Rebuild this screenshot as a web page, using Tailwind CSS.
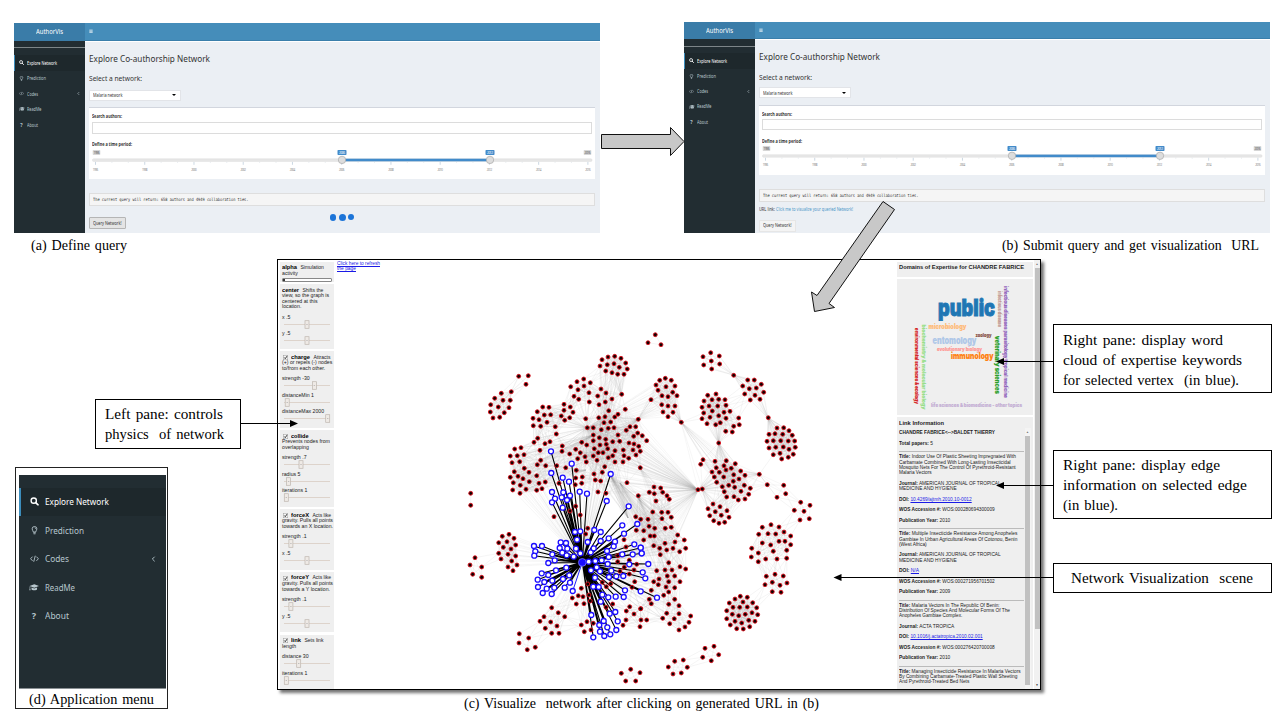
<!DOCTYPE html>
<html lang="en">
<head>
<meta charset="utf-8">
<title>AuthorVis workflow</title>
<script src="https://cdn.jsdelivr.net/npm/@tailwindcss/browser@4"></script>
</head>
<body class="bg-white">
<svg class="hidden" aria-hidden="true">
  <symbol id="i-search" viewBox="0 0 14 14"><circle cx="5.8" cy="5.8" r="4.2" fill="none" stroke="currentColor" stroke-width="2.2"/><path d="M9 9l3.6 3.6" stroke="currentColor" stroke-width="2.6" stroke-linecap="round"/></symbol>
  <symbol id="i-bulb" viewBox="0 0 14 14"><path d="M5.2 9.6C5.2 8 3.2 7 3.2 4.6a3.8 3.8 0 0 1 7.6 0C10.800 7 8.800 8 8.800 9.600z M7.200 2.700q1.600.100 1.700 1.600" fill="none" stroke="currentColor" stroke-width="1.400"/><path d="M5 10.900h4M5.500 12.600h3" stroke="currentColor" stroke-width="1.400"/></symbol>
  <symbol id="i-code" viewBox="0 0 14 14"><path d="M4 3.700L.900 7 4 10.300M10 3.700L13.100 7 10 10.300M8.200 2.300L5.800 11.700" fill="none" stroke="currentColor" stroke-width="1.400"/></symbol>
  <symbol id="i-cap" viewBox="0 0 18 14"><path d="M9.500 1.500l8.500 3-8.500 3-8.500-3z M4.500 7v3.400c0 2.400 10 2.400 10 0V7l-5 1.800z M1.200 5.200h1v4l.700 3H.500l.700-3z" fill="currentColor"/></symbol>
  <symbol id="i-left" viewBox="0 0 8 14"><path d="M6 3L2 7l4 4" fill="none" stroke="currentColor" stroke-width="1.600"/></symbol>
  <symbol id="i-bars" viewBox="0 0 12 12"><path d="M1 2.500h10M1 6h10M1 9.500h10" stroke="currentColor" stroke-width="2"/></symbol>
</svg>

<main class="relative w-[1280px] h-[720px] overflow-hidden bg-white text-black font-['Liberation_Serif',serif] text-[15.500px] [word-spacing:1.500px]">
  <section class="flex items-start pl-[14px] pt-[22px] gap-[84px] h-[259px]">
    <figure class="w-[586px]">
      <div id="shotA" class="mt-px flex flex-col h-[210px] font-['Noto_Sans',sans-serif] [word-spacing:0]"></div>
      <figcaption class="pl-[17px] h-[24px] leading-[24px]"><span data-w="96">(a) Define query</span></figcaption>
    </figure>
    <figure class="w-[586px]">
      <div id="shotB" class="flex flex-col h-[211px] font-['Noto_Sans',sans-serif] [word-spacing:0]"></div>
      <figcaption class="pl-[318px] h-[24px] leading-[24px]"><span data-w="257">(b) Submit query and get visualization&nbsp; URL</span></figcaption>
    </figure>
  </section>

  <section class="flex h-[461px]">
    <aside class="w-[277px] pt-[140px]">
      <div class="ml-[95px] w-[146px] h-[50px] border border-black bg-white pl-[9px] pt-[4px] leading-[20px]">
        <div><span data-w="118">Left pane: controls</span></div>
        <div><span data-w="119">physics&nbsp; of network</span></div>
      </div>
      <figure class="ml-[15px] mt-[18px] w-[153px] h-[242px] border border-[#222] pl-[3px] pt-[7px]">
        <ul id="menuD" class="w-[147px] h-[214px] bg-[#222d32] border-b border-[#8a9094] pt-[12.500px] text-[#b8c7ce] font-['Noto_Sans',sans-serif] [word-spacing:0] text-[9px]"></ul>
        <figcaption class="pl-[10px] leading-[20px]"><span data-w="125">(d) Application menu</span></figcaption>
      </figure>
    </aside>

    <figure class="w-[764px]">
      <div class="w-[764px] h-[431px] border border-black bg-white shadow-[3px_3px_3px_rgba(0,0,0,0.55)] flex overflow-hidden font-['Liberation_Sans',sans-serif] [word-spacing:0] text-[5.300px] leading-[5.500px] text-[#222]">
        <div id="controls" class="ml-[2px] mt-[1.500px] w-[54px] flex flex-col gap-[2.400px]"></div>
        <div class="w-[563px] relative">
          <svg id="net" class="block w-[563px] h-[429px]" viewBox="334 260 563 429"></svg>
          <a class="absolute left-[3px] top-[0.500px] text-[#1a1ae6]" href="#"><span class="underline" data-w="43">Click here to refresh</span><br><span class="underline" data-w="19">the page</span></a>
        </div>
        <div class="w-[136px] flex flex-col gap-[2.500px] pt-[1.500px]">
          <h2 class="h-[15.500px] bg-[#efefef] pl-[2px] pt-[2.500px] font-bold text-[6px] leading-[7px]"><span data-w="125">Domains of Expertise for CHANDRE FABRICE</span></h2>
          <svg class="block h-[135.500px] w-[136px] shrink-0 bg-[#efefef]" viewBox="897 279 136 135.500" font-family="Inter, sans-serif" font-weight="900" id="cloud"></svg>
          <div class="h-[272px] bg-[#efefef] flex">
            <div id="links" class="pl-[2px] pt-[2.500px] w-[127.500px]"></div>
            <div class="w-[6px] h-[261px] mt-[11px] bg-[#f4f4f4] flex flex-col items-center"><span class="text-[3px] leading-[8px] text-[#777]">▲</span><div class="w-[5px] h-[249px] bg-[#c1c1c1]"></div></div>
          </div>
        </div>
        <div class="ml-[1px] w-[6px] bg-[#f1f1f1] flex flex-col items-center"><span class="text-[3px] leading-[8px] text-[#777]">▲</span><div class="w-[5px] h-[361px] bg-[#c1c1c1]"></div><span class="mt-auto text-[3px] leading-[8px]">▼</span></div>
      </div>
      <figcaption class="pl-[187px] pt-[2px] leading-[22px]"><span data-w="355">(c) Visualize&nbsp; network after clicking on generated URL in (b)</span></figcaption>
    </figure>

    <aside class="pl-[12px] pt-[65px] leading-[20px]">
      <div class="w-[219px] h-[69px] border border-black bg-white pl-[9px] pt-[5px]">
        <div><span data-w="160">Right pane: display word</span></div>
        <div><span data-w="179">cloud of expertise keywords</span></div>
        <div><span data-w="176">for selected vertex&nbsp; (in blue).</span></div>
      </div>
      <div class="mt-[57px] w-[219px] h-[69px] border border-black bg-white pl-[9px] pt-[4px]">
        <div><span data-w="157">Right pane: display edge</span></div>
        <div><span data-w="184">information on selected edge</span></div>
        <div><span data-w="55">(in blue).</span></div>
      </div>
      <div class="mt-[44px] w-[219px] h-[30px] border border-black bg-white pl-[17px] pt-[4px]"><span data-w="182">Network Visualization&nbsp; scene</span></div>
    </aside>
  </section>

  <svg class="absolute left-0 top-0 w-[1280px] h-[720px] pointer-events-none" viewBox="0 0 1280 720">
    <g fill="#c8c8c8" stroke="#111" stroke-width="1">
      <path d="M601.500 134.500H670.500V127.500L684 141.500L670.500 155.500V148.500H601.500Z"/>
      <path d="M883 201.500L894.500 209.500L829 303.500L834.500 307.500L814.500 311.500L811.500 292L817 295.500Z"/>
    </g>
    <g stroke="#000" stroke-width="1">
      <path d="M241 423.500H291M1053 361.500H1003M1053 485.500H1003M1053 577.500H840"/>
      <path stroke="none" d="M298 423.500L290 420v7zM996 361.500l8-3.500v7zM996 485.500l8-3.500v7zM833.500 577.500l8-3.500v7z"/>
    </g>
  </svg>
</main>

<script>
const $ = id => document.getElementById(id);
const t = (s, w, cls = '') => `<span class="${cls}" data-w="${w}">${s}</span>`;
const icon = (n, w, h) => n === '?' ? '<b>?</b>' : `<svg style="width:${w}px;height:${h}px"><use href="#i-${n}"/></svg>`;
const items = [['search','Explore Network',30,64],['bulb','Prediction',19,39],['code','Codes',11,24],['cap','ReadMe',14.5,30],['?','About',11,24]];

/* Dashboard screenshots: each row is given as its height and its content */
function dashboard(o) {
  const row = (h, html = '', cls = '') => `<div class="flex items-center shrink-0 ${cls}" style="height:${h}px">${html}</div>`;
  const side = items.map((m, i) => row(o.item,
    `<span class="w-[6px] shrink-0 flex justify-center text-[5px]">${icon(m[0], m[0]==='cap'?6:5, m[0]==='cap'?5.5:5)}</span><span class="ml-[2px] flex">${t(m[1], m[2])}</span>${i===2?`<span class="ml-auto mr-[5px]">${icon('left',3,5)}</span>`:''}`,
    i === 0 ? 'bg-[#1e282c] text-white border-l border-[#3c8dbc] pl-[3.500px]' : 'pl-[4.500px]')).join('');
  const years = [1996,1998,2000,2002,2004,2006,2008,2010,2012,2014,2016];
  const px = y => 2.5 + (y - 1996) * 24.62;
  const ticks = years.map(y => `<path d="M${px(y)} 0v3" stroke="#a9bdd0" stroke-width=".6"/>` + (y < 2016 ? `<path d="M${px(y)+16.4} 0v1M${px(y)+32.8} 0v1" stroke="#ccd6df" stroke-width=".5"/>` : '') + `<text x="${px(y)}" y="${o.lab}" text-anchor="middle" font-size="3" fill="#888" textLength="5.500">${y}</text>`).join('');
  const flag = (x, y, b) => `<rect x="${x-(b?4.5:3.8)}" y="0" width="${b?9:7.6}" height="5" rx=".7" fill="${b?'#428bca':'#d6d6d6'}"/><text x="${x}" y="3.7" text-anchor="middle" font-size="3.2" fill="${b?'#fff':'#555'}" textLength="6">${y}</text>`;
  const ty = o.track;
  const slider = `<svg class="block w-[506px] overflow-visible" style="height:${o.slider}px">
    ${flag(7.5,1996)}${flag(498.5,2016)}${flag(253,2006,1)}${flag(401,2012,1)}
    <g transform="translate(4 ${ty+1.8})">${ticks}</g>
    <rect x="3.500" y="${ty-1.2}" width="499.500" height="2.600" rx="1" fill="#e7e7e7" stroke="#d9d9d9" stroke-width=".4"/>
    <rect x="253" y="${ty-1.3}" width="148" height="2.600" fill="#428bca"/>
    <g fill="#ddd" stroke="#aaa" stroke-width=".7"><circle cx="253" cy="${ty-.1}" r="3.700"/><circle cx="401" cy="${ty-.1}" r="3.700"/></g></svg>`;
  return `<div class="flex text-white" style="height:${o.head}px">
      <div class="w-[70.500px] bg-[#3a7ca8] flex items-center pl-[22px] text-[7.500px]">${t('AuthorVis', 27)}</div>
      <div class="grow bg-[#458dba] border-b border-[#3a7fab] flex items-center pl-[4.500px]">${icon('bars',4,4.5)}</div>
    </div>
    <div class="flex grow min-h-0">
      <div class="w-[70.500px] shrink-0 bg-[#222d32] text-[#b8c7ce] text-[4.900px] leading-[6px]">
        ${row(o.s0,'','border-b border-[#7d8588]')}${row(o.s1)}${side}
      </div>
      <div class="grow min-w-0 bg-[#ebeff4] border-t border-white pl-[4.400px] pr-[5px] text-[#333] overflow-hidden leading-none">
        ${row(o.a)}
        ${row(14, t('Explore Co-authorship Network', 121), 'text-[9.800px]')}
        ${row(o.b)}
        ${row(10, t('Select a network:', 53), 'text-[7.600px]')}
        ${row(o.c)}
        ${row(o.sel, t('Malaria network', 29.5) + '<span class="ml-auto border-x-[2px] border-x-transparent border-t-[2.500px] border-t-black"></span>', 'w-[92px] bg-white border border-[#e2e4e8] pl-[3px] pr-[4px] text-[4.600px]')}
        ${row(o.d)}
        <div class="bg-white border-t border-[#d2d6de] w-[506px]" style="height:${o.box}px">
          ${row(o.e, t('Search authors:', 30), 'pl-[3px] pt-[3px] text-[4.900px] font-bold')}
          ${row(o.inp, '', 'ml-[3px] w-[500px] border border-[#dcdcdc] bg-white')}
          ${row(o.f)}
          ${row(8, t('Define a time period:', 40), 'pl-[3px] text-[4.900px] font-bold')}
          ${row(o.g)}
          ${slider}
        </div>
        ${row(o.h)}
        ${row(13, t('The current query will return: 658 authors and 4949 collaboration ties.', 155.5), "w-[506px] bg-[#f5f5f5] border border-[#dedede] pl-[3px] text-[4.400px] font-['DejaVu_Sans_Mono',monospace]")}
        ${o.tail(row)}
      </div>
    </div>`;
}
$('shotA').innerHTML = dashboard({head:18, s0:6.5, s1:7.7, item:15.45, a:10, b:7.5, c:6, sel:11.5, d:6.3, box:71.5,
  e:13.9, inp:11.5, f:7.2, g:1, slider:20, track:10, lab:8.8, h:14.7,
  tail: row => `<div class="flex">${row(12, t('Query Network!', 28.5), 'mt-[10.500px] w-[37px] bg-[#e4e4e4] border border-[#b5b5b5] rounded-[1px] pl-[3px] text-[4.900px]')}
    <div class="ml-[204.500px] mt-[7.500px] flex items-center gap-[2.500px] h-[7px]"><i class="w-[6px] h-[6.500px] rounded-full bg-[#1c74d8]"></i><i class="w-[7px] h-[7px] rounded-full bg-[#1c74d8]"></i><i class="w-[6px] h-[6px] rounded-full bg-[#1c74d8]"></i></div></div>`});
$('shotB').innerHTML = dashboard({head:17, s0:7.5, s1:6.9, item:15.15, a:10, b:8.3, c:5, sel:11, d:7, box:69.5,
  e:13, inp:11, f:6.8, g:.5, slider:20, track:9.9, lab:8.5, h:14.7,
  tail: row => row(12.5, t('URL link:', 16) + '<span class="text-[#4a96c8] ml-px" data-w="77">Click me to visualize your queried Network!</span>', 'mt-[0.600px] text-[4.900px]')
    + `<div class="mt-[4.300px] flex items-center h-[12px] w-[37px] bg-[#f4f4f4] border border-[#e6e6e6] pl-[3px] text-[4.900px]">${t('Query Network!', 28.5)}</div>`});

$('menuD').innerHTML = items.map((m, i) => `<li class="flex items-center h-[28.500px] ${i===0?'bg-[#1e282c] text-white border-l-2 border-[#3c8dbc] pl-[8px]':'pl-[10px]'}"><span class="w-[10px] flex justify-center">${icon(m[0], m[0]==='cap'?11:9, m[0]==='code'?9.5:8.8)}</span><span class="ml-[6.200px] flex">${t(m[1], m[3])}</span>${i===2?`<span class="ml-auto mr-[10px]">${icon('left',5,8)}</span>`:''}</li>`).join('');

/* Physics control cards: height, checkbox, name, description lines, sliders */
const cards = [
  [20.6, 0, 'alpha', ['Simulation','activity'], [], 15],
  [64.6, 0, 'center', ['Shifts the','view, so the graph is','centered at this','location.'], [['x .5',.5],['y .5',.5]], 17],
  [76.6, 1, 'charge', ['Attracts','(+) or repels (-) nodes','to/from each other.'], [['strength -30',.66],['distanceMin 1',.07],['distanceMax 2000',.95]], 19],
  [76.6, 1, 'collide', ['','Prevents nodes from','overlapping'], [['strength .7',.37],['radius 5',.1],['iterations 1',.05]], 17.5],
  [60.3, 1, 'forceX', ['Acts like','gravity. Pulls all points','towards an X location.'], [['strength .1',.15],['x .5',.5]], 18],
  [60, 1, 'forceY', ['Acts like','gravity. Pulls all points','towards a Y location.'], [['strength .1',.15],['y .5',.5]], 18],
  [55, 1, 'link', ['Sets link','length'], [['distance 30',.32],['iterations 1',.05]], 10],
];
$('controls').innerHTML = cards.map(([h, chk, n, d, s, w]) => `<div class="bg-[#efefef] pl-[2px] pt-[3px] shrink-0 overflow-hidden" style="height:${h}px">
  <div class="flex items-center h-[6px] whitespace-nowrap">${chk?'<svg class="w-[5px] h-[5px] mr-[3px] ml-px shrink-0" viewBox="0 0 10 10"><rect x=".5" y=".5" width="9" height="9" fill="#f8f8f8" stroke="#999"/><path d="M2.500 5l2 2.300L8 2.300" fill="none" stroke="#111" stroke-width="1.700"/></svg>':''}<b class="flex text-[6px] text-black">${t(n, w)}</b><span class="ml-[3.500px] text-[5px]">${d[0]}</span></div>
  ${d.slice(1).map(x => `<div class="whitespace-nowrap text-[5.200px]">${x}</div>`).join('')}
  ${n==='alpha'?'<div class="mt-[1.500px] w-[50px] h-[4px] rounded-[1px] border border-[#888] bg-white"><div class="w-[2px] h-[2px] bg-[#333]"></div></div>':''}
  <div class="h-[5px]"></div>
  ${s.map(([l, v]) => `<div class="h-[16.500px] whitespace-nowrap text-[5.200px]"><div class="h-[5px]">${l}</div><svg class="block w-[50px] h-[9px]" viewBox="0 0 50 9"><path d="M2 4.500h46" stroke="#ddd3cb" stroke-width="1"/><rect x="${(2+46*v-2).toFixed(1)}" y=".7" width="4" height="7.600" fill="#efeae6" stroke="#bdb6ae" stroke-width=".7"/><path d="M${2+46*v-.7} 4.500h1.400" stroke="#aaa" stroke-width=".7"/></svg></div>`).join('')}
</div>`).join('');

/* Publications of the selected link */
const P = (...l) => `<p class="mb-[5.050px]">${l.map(([s, w]) => `<span class="block h-[5.420px] leading-[5.400px]">${t(s, w)}</span>`).join('')}</p>`;
const B = s => `<b>${s}</b> `;
const A = s => `<a class="text-[#1a1ae6] underline">${s}</a>`;
const hr = '<hr class="w-[125px] border-t-[1px] border-[#bbb] mb-[2px]">';
$('links').innerHTML = `<h3 class="font-bold text-[6px] leading-[6px] mb-[4.800px]">${t('Link Information', 45)}</h3>` +
  P([B('CHANDRE FABRICE&lt;--&gt;BALDET THIERRY'),96]) + P([B('Total papers:')+'5',34]) + hr +
  P([B('Title:')+'Indoor Use Of Plastic Sheeting Impregnated With',117],['Carbamate Combined With Long-Lasting Insecticidal',111.7],['Mosquito Nets For The Control Of Pyrethroid-Resistant',116.7],['Malaria Vectors',32.7]) +
  P([B('Journal:')+'AMERICAN JOURNAL OF TROPICAL',101.7],['MEDICINE AND HYGIENE',57.7]) + P([B('DOI:')+A('10.4269/ajtmh.2010.10-0012'),72.7]) + P([B('WOS Accession #:')+'WOS:000280694300009',95.7]) + P([B('Publication Year:')+'2010',51.3]) + hr +
  P([B('Title:')+'Multiple Insecticide Resistance Among Anopheles',118.3],['Gambiae In Urban Agricultural Areas Of Cotonou, Benin',118.3],['(West Africa)',27.7]) +
  P([B('Journal:')+'AMERICAN JOURNAL OF TROPICAL',101.7],['MEDICINE AND HYGIENE',57.7]) + P([B('DOI:')+A('N/A'),20]) + P([B('WOS Accession #:')+'WOS:000271956701502',95.7]) + P([B('Publication Year:')+'2009',51.3]) + hr +
  P([B('Title:')+'Malaria Vectors In The Republic Of Benin:',100.7],['Distribution Of Species And Molecular Forms Of The',111],['Anopheles Gambiae Complex.',63.3]) +
  P([B('Journal:')+'ACTA TROPICA',55.3]) + P([B('DOI:')+A('10.1016/j.actatropica.2010.02.001'),83.7]) + P([B('WOS Accession #:')+'WOS:000276420700008',95.7]) + P([B('Publication Year:')+'2010',51.3]) + hr +
  P([B('Title:')+'Managing Insecticide Resistance In Malaria Vectors',121.7],['By Combining Carbamate-Treated Plastic Wall Sheeting',118.3],['And Pyrethroid-Treated Bed Nets',70.3]);

/* Word cloud: text, x, baseline y, font size, length, colour, rotation */
$('cloud').innerHTML = [
  ['public',938,315.5,23,57,'#1f77b4',0],['microbiology',928.5,328.5,7.2,38,'#ffbb78',0],['zoology',975.5,336.5,4.5,16,'#8c564b',0],
  ['entomology',932.5,344,9.3,44,'#aec7e8',0],['evolutionary biology',937,351,5,45,'#ff9896',0],['immunology',951,359,8.8,42.5,'#ff7f0e',0],
  ['life sciences & biomedicine - other topics',931,407,5,91,'#c5b0d5',0],
  ['environmental sciences & ecology',914.8,328,5,76,'#d62728',90],['biochemistry & molecular biology',922,324.5,5,85,'#98df8a',90],
  ['veterinary sciences',995,336,6.3,58,'#2ca02c',90],['infectious disease',997.7,291,4.7,36,'#c49c94',90],
  ['infectious diseases parasitology tropical medicine',1003.6,286,5,112,'#9467bd',90],
].map(([s,x,y,f,l,c,r]) => `<text transform="translate(${x} ${y}) rotate(${r})" font-size="${f}" fill="${c}" stroke="${c}" stroke-width="${f > 20 ? .9 : .1}" textLength="${l}" lengthAdjust="spacingAndGlyphs">${s.replace('&','&amp;')}</text>`).join('');

/* Network: node coordinates are in thirds of a pixel from the origin of their tile */
const pts = (ox, oy, s) => s.trim().split(/\s+/).map(p => { const [a, b] = p.split(','); return [ox + a/3, oy + b/3]; });
const red = [
 ...pts(440,320,`486,119 504,111 524,109 543,115 557,129 480,138 502,134 522,131 538,142 562,147 497,153 516,158 533,163 552,163
 431,177 411,185 451,188 392,200 432,198 414,209 447,218 402,229 416,238 448,246 483,207 498,219 473,228 516,237 496,246 477,254 545,223
 236,169 265,167 258,193 214,215 184,220 164,235 189,241 211,241 152,254 175,261 207,263 151,276 193,278 159,294 179,292
 308,261 327,262 292,275 313,285 332,284 279,295 297,299 321,307 280,317 302,319 346,320 349,342
 372,253 391,261 372,271 399,277 364,288 389,293 374,301 437,296 442,323 460,323 476,293 495,290 506,272 524,291 534,283 556,268 492,308 512,306 484,329 505,325 522,323 559,331 570,320 587,320 595,298 593,339 581,349
 460,345 478,353 497,358 460,362 480,375 499,373 518,365 539,364 534,345 425,367 440,375 463,386 503,386 407,388 421,398 435,410 475,398 489,398 525,392 550,390 567,369 582,372 596,379 579,390 588,405 566,415 552,407 518,407 505,413 460,408 471,421 525,426 549,426 494,440 487,457 439,426 413,416 389,402 367,378 366,394
 330,365 315,371 293,355 282,367 300,391 224,387 243,383 211,408 232,407 252,404 216,428 239,425 302,421 292,434 317,437 350,437 377,443 409,451
 253,445 223,455 267,457 211,472 234,469 249,476 290,467 220,488 241,496 268,485 297,490 316,486 218,510 240,520 258,508 290,511 306,506 357,490
 407,474 427,471 406,494 425,490 462,462 466,480 482,483 474,516 498,520 561,488 595,527 92,520 92,556 407,559`),
 ...pts(640,320,`46,44 24,68 63,74 212,98 189,110 238,108 214,123 191,135 239,132 215,147 281,166
 323,180 343,180 308,198 364,193 328,206 349,204 314,222 345,226 371,217 331,240 360,238 385,293
 76,175 59,181 94,181 48,195 78,200 105,198 54,211 98,217 66,227 84,230 111,227 33,239 65,254 84,258 105,258 69,276 99,277 84,290 124,307
 228,222 203,226 192,243 216,239 236,238 255,239 186,262 207,258 233,258 258,256 191,279 217,273 252,277 270,274 186,296 210,292 236,287 258,295 296,294 201,311 227,314 241,308 281,319 298,314 257,334 277,336 236,369
 411,324 431,323 447,332 387,343 405,341 428,343 457,346 381,364 400,362 422,362 445,363 464,363 387,384 407,382 430,381 447,388 466,382 400,404 420,400 460,403 425,417 445,412
 189,419 182,433 225,424 259,422 252,437 286,431 229,443 274,445 216,456 238,457 258,450 302,453 223,471 251,471 281,464 315,466 230,487 280,484 297,477 247,500 266,496 284,502 313,496 331,505 253,515 303,514 326,523 260,531 282,530 295,540 315,537 358,463 382,494 431,496 437,521 411,532
 174,509 187,507 219,552 204,566 240,560 226,575 261,572 209,587 244,586 267,592 221,602 237,610 254,607
 482,547 510,556 463,571 492,574 508,596 480,600
 393,614 367,622 417,621 356,643 384,641 407,642 432,636 452,648 367,669 392,675 417,664 435,664 452,674 335,685 355,699 400,694 440,691 334,711 355,725 377,717 411,717 440,715
 405,763 379,769 430,768 375,794 397,787 441,789 420,796 397,815 423,817
 301,829 285,837 322,832 268,849 309,846 338,848 260,872 279,862 299,862 322,861 350,863 277,883 296,887 316,883 336,878 353,884 260,896 285,904 305,909 326,901 345,904 271,915 290,926 310,927 329,920
 42,501 62,504 28,517 43,521 68,517 81,527 88,538 48,543 38,576 65,577 84,577 2,598 24,598 66,596 94,592 27,619 44,625 76,625 94,622 11,632 31,648 43,648 11,660 113,645 133,660 105,666 75,670 41,677 59,685 80,690 99,685 137,685 119,695 61,704
 86,728 120,740 137,747 50,752 75,750 96,750 82,768 104,768 57,777 41,785 55,794 86,785 120,785 78,801 104,803 34,811 86,816 71,826 28,838 34,851 104,838 86,853 117,857 80,880 117,881 68,895 103,896 89,911 152,888 147,907 135,921 117,930
 2,866 3,900 20,900 104,1024 130,1020 85,1041 142,1042 99,1062 124,1059 195,985 222,979 188,1012 236,1004 214,1022 7,347 20,362 1,394 1,443`),
 ...pts(440,500,`105,173 90,195 125,201 98,223 125,232 207,103 187,109 222,115 176,128 201,125 227,135 190,142 213,147 176,160 204,163 227,168 183,177 215,183 231,195 204,201 219,212
 342,50 390,33 421,45 437,102 443,85 424,265 443,252 397,294 415,287 429,290 447,285 409,312 432,311 451,303 487,247 499,260 512,251 498,322 518,312
 335,323 355,338 312,350 300,364 332,366 374,350 316,385 351,378 335,400 357,400 238,401 266,414 237,429 286,442 262,449
 441,365 424,375 460,370 453,390 433,395 569,320 559,333 582,342 558,360 549,376 600,380 602,326 572,508 544,520 600,518 557,543 587,543
 533,167 533,185 540,214 553,202 568,181 590,193 568,222 582,210 584,245 576,262 558,141 552,119 587,50 589,91`)
];
const blue = [
 ...pts(440,320,'333,394 395,431 334,459 368,473 387,485 336,516 370,517 390,527 419,515 441,521 345,536 365,532 381,540 336,547 368,563 512,462 500,543 566,559'),
 ...pts(640,320,'2,683 5,700 25,732 8,757 16,775 2,814 51,833'),
 ...pts(440,500,`405,96 421,94 463,90 482,96 411,119 362,127 378,129 443,126 482,123 506,115 525,125 547,76 552,101 592,72 282,138 306,138 286,154 283,167 337,163 359,144 382,146 367,158 380,166 408,146 421,160 401,170 452,157 461,145 501,153 521,139
 344,181 325,189 379,203 348,211 305,220 325,225 293,239 313,246 337,242 369,237 388,226 390,248 294,261 320,266 343,263 374,263 308,279 335,282 446,185 466,183 485,181 506,171 503,192 470,202 453,211 480,214 514,212 465,233 507,231 529,229 550,228
 583,133 602,143 605,160 578,163 547,163 568,193 555,271 551,291 527,290 505,292 482,305 487,284 476,261 460,260 454,345 509,341 526,336 491,363 533,364 478,375 502,382 529,390 480,395 493,408 511,403 460,412`)
];
const hub = [582.3, 562.4], sel = [572.7, 591];
const line = (a, b) => `M${a[0].toFixed(1)} ${a[1].toFixed(1)}L${b[0].toFixed(1)} ${b[1].toFixed(1)}`;
const dist = (a, b) => Math.hypot(a[0]-b[0], a[1]-b[1]);
let near = [];
red.forEach((a, i) => red.slice(i+1).forEach(b => { if (dist(a, b) < 25) near.push(line(a, b)); }));
/* Bundles: every node within r of (x, y) is joined to the given author */
const fans = [[698,490,725,478,24],[702,489,660,495,26],[698,490,610,450,45],[698,490,650,525,35],[702,489,715,514,16],[718.7,443,717,412,22],[718.7,443,725,475,24],[768,418,780,443,22],[768,418,753,390,14],[733.7,375,753,390,14],[733.7,375,711,361,12],
 [681,422,668,392,26],[681,422,698,490,5],[681,422,725,468,20],[638,419,665,395,22],[638,419,600,440,30],[587,428,665,390,22],[587,428,550,420,25],[587,428,590,395,18],[587,428,550,460,25],[587,428,613,450,35],[600,427,613,365,15],[606,433,613,365,15],[621,394,613,365,15],[593,435,530,475,25],[593,435,520,460,22],
 [606,450,530,480,28],[606,450,550,530,30],[610,475,655,520,25],[610,475,665,570,30],[620,483,660,545,30],[640,468,665,500,22],[638,496,665,545,35],[586,470,520,480,22],[582,562,507,552,18],[582,562,555,620,16],[582,562,588,630,12],[582,562,640,615,14],[582,562,660,590,28],[582,562,675,620,20],[582,562,665,555,26],[582,562,655,525,24],[582,562,530,480,24],[582,562,605,450,22],
 [511,392,523,378,9],[511,392,500,408,17],[759,474,776,488,14],[759,474,733,475,14],[654,532,645,500,18],[612,560,665,545,22],[628,518,600,455,22]];
const fan = fans.flatMap(([x, y, tx, ty, r]) => red.filter(p => dist(p, [tx, ty]) < r).map(p => line([x, y], p)));
$('net').innerHTML = `<g fill="none" stroke="#999" stroke-width=".6"><g stroke-opacity=".16">${near.map(d => `<path d="${d}"/>`).join('')}</g><g stroke-opacity=".14">${fan.map(d => `<path d="${d}"/>`).join('')}</g></g>
 <path d="${blue.map(p => line(hub, p)).join('')}" stroke="#000" stroke-width="1.100"/><path d="${line(hub, sel)}" stroke="#22f" stroke-width="1"/>
 <g fill="#100" stroke="#e0101c" stroke-width=".9">${red.map(p => `<circle cx="${p[0].toFixed(1)}" cy="${p[1].toFixed(1)}" r="1.950"/>`).join('')}</g>
 <g fill="#fff" stroke="#1a0cff" stroke-width="1.300">${[...blue, sel].map(p => `<circle cx="${p[0].toFixed(1)}" cy="${p[1].toFixed(1)}" r="2.500"/>`).join('')}</g>
 <circle cx="${hub[0]}" cy="${hub[1]}" r="3.900" fill="#1a0cff" stroke="#99f" stroke-width=".6"/>`;

/* Scale each labelled run to the length in its data-w attribute, again whenever its natural size changes */
const fit = new ResizeObserver(list => list.forEach(({ target: e, contentRect: { width: n } }) => {
  if (!n) return;
  e.style.transform = `scaleX(${e.dataset.w / n})`;
  e.style.marginRight = `${e.dataset.w - n}px`;
}));
document.querySelectorAll('[data-w]').forEach(e => {
  e.classList.add('inline-block', 'whitespace-nowrap', 'origin-left', 'shrink-0');
  fit.observe(e);
});
</script>
</body>
</html>
